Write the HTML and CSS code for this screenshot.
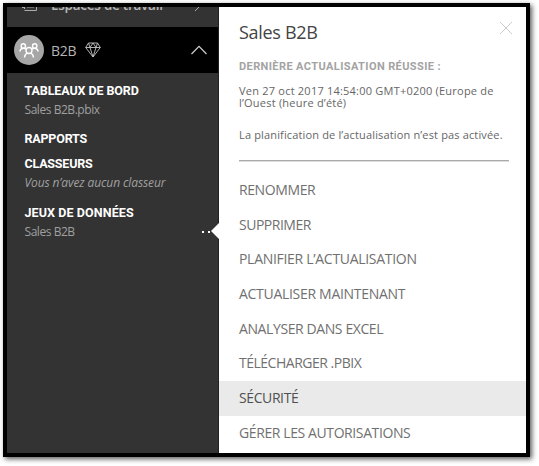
FILE: index.html
```html
<!DOCTYPE html>
<html lang="fr">
<head>
<meta charset="utf-8">
<title>Sales B2B</title>
<link rel="stylesheet" href="styles.css">
</head>
<body>
<div class="window">
  <nav class="sidebar">
    <div class="workspaces">
      <svg class="ws-icon" width="18" height="14" viewBox="0 0 18 14"><path d="M3.500 1v6M3.500 8.500h12V1M1 5.500h2.500M6 5h7" /></svg>
      <span class="ws-label">Espaces de travail</span>
      <svg class="ws-arrow" width="8" height="12" viewBox="0 0 8 12"><path d="M1 1l5 5-5 5"/></svg>
    </div>
    <div class="current">
      <svg class="avatar" width="30" height="30" viewBox="0 0 30 30">
        <circle cx="15" cy="15" r="15" fill="#a6a6a6"/>
        <g fill="none" stroke="#fff" stroke-width="1.4">
          <circle cx="9.300" cy="11" r="2.200"/><circle cx="20.700" cy="11" r="2.200"/><circle cx="15" cy="15.500" r="3"/>
          <path d="M6 16.500q0-3 3.300-3.300l3 1M24 16.500q0-3-3.300-3.300l-3 1M10.500 22.500q.3-3.500 3-4.300M19.500 22.500q-.3-3.500-3-4.300"/>
        </g>
      </svg>
      <span class="current-name">B2B</span>
      <svg class="diamond" width="16" height="16" viewBox="0 0 16 16"><path d="M3.500 1h9L15.300 5.500 8 15 .7 5.500zM.7 5.500h14.600M3.500 1l1.500 4.500L8 15l3-9.500L12.500 1M5 5.500L8 1l3 4.500"/></svg>
      <svg class="chevron" width="16" height="10" viewBox="0 0 16 10"><path d="M.5 9L8 1.300 15.500 9"/></svg>
    </div>
    <h2 class="w-tdb">TABLEAUX DE BORD</h2>
    <p class="w-pbix">Sales B2B.pbix</p>
    <h2 class="w-rap">RAPPORTS</h2>
    <h2 class="w-cla">CLASSEURS</h2>
    <p class="empty">Vous n’avez aucun classeur</p>
    <h2 class="w-jeux">JEUX DE DONNÉES</h2>
    <p class="dataset"><span>Sales B2B</span><span class="dots"><i></i><i></i></span></p>
  </nav>
  <main class="panel">
    <div class="pointer"></div>
    <header>
      <h1>Sales B2B</h1>
      <svg width="14" height="14" viewBox="0 0 14 14"><path d="M1 1l12 12M13 1L1 13"/></svg>
    </header>
    <h3>DERNIÈRE ACTUALISATION RÉUSSIE :</h3>
    <div class="info">Ven 27 oct 2017 14:54:00 GMT+0200 (Europe de<br>l’Ouest (heure d’été)</div>
    <div class="info schedule">La planification de l’actualisation n’est pas activée.</div>
    <div class="rule"></div>
    <ul>
      <li>RENOMMER</li>
      <li class="tight">SUPPRIMER</li>
      <li class="wide">PLANIFIER L’ACTUALISATION</li>
      <li class="wide">ACTUALISER MAINTENANT</li>
      <li>ANALYSER DANS EXCEL</li>
      <li class="tight">TÉLÉCHARGER .PBIX</li>
      <li class="selected">SÉCURITÉ</li>
      <li>GÉRER LES AUTORISATIONS</li>
    </ul>
  </main>
</div>
</body>
</html>
```
FILE: styles.css
```css
* { box-sizing: border-box; margin: 0; padding: 0; }
body { width: 539px; height: 466px; background: #fff; overflow: hidden; padding: 3px; font-family: "Open Sans", "Noto Sans", sans-serif; }
.window { width: 527px; height: 454px; border: 4px solid #000; display: flex; overflow: hidden; box-shadow: 2px 2px 5px rgba(0,0,0,.65); background: #fff; }
svg { fill: none; flex: none; }
.sidebar { width: 212px; background: #333; border-right: 1px solid #222; color: #a0a0a0; flex: none; }
.workspaces { height: 20px; display: flex; align-items: flex-start; overflow: hidden; padding-left: 14px; }
.ws-icon { stroke: #aaa; margin-top: -5px; }
.ws-label { font-size: 13.500px; line-height: 18px; margin: -11px 0 0 12px; color: #b8b8b8; width: 111px; white-space: nowrap; letter-spacing: -.25px; font-weight: 600; }
.ws-arrow { stroke: #aaa; margin: -7px 0 0 32px; }
.current { height: 46px; background: #000; display: flex; align-items: center; padding-left: 7px; }
.current-name { font-size: 14px; width: 34px; margin-left: 7px; color: #b5b5b5; letter-spacing: -.3px; }
.diamond { stroke: #c4c4c4; stroke-width: .9; }
.chevron { stroke: #d0d0d0; stroke-width: 1.2; margin-left: 90px; }
.sidebar h2 { font: 700 12.500px/16px Roboto, sans-serif; color: #fff; padding-left: 17.500px; white-space: nowrap; letter-spacing: -.1px; }
.sidebar p { font-size: 12px; line-height: 16px; padding-left: 17.500px; white-space: nowrap; }
.w-tdb { margin-top: 10px; }
.sidebar .w-pbix { margin-top: 3px; letter-spacing: -.45px; }
.w-rap { margin-top: 13px; }
.sidebar .w-rap, .sidebar .w-cla { letter-spacing: -.2px; }
.w-cla { margin-top: 9px; }
.sidebar .empty { margin-top: 3px; font-style: italic; letter-spacing: -.1px; }
.w-jeux { margin-top: 14px; }
.sidebar .w-jeux { letter-spacing: .1px; }
.sidebar .dataset { margin-top: 3px; display: flex; justify-content: space-between; align-items: center; padding-right: 8px; letter-spacing: -.45px; }
.dots { display: flex; gap: 4px; }
.dots i { width: 2px; height: 2px; background: #fff; }
.panel { width: 307px; position: relative; color: #666; }
.pointer { position: absolute; left: -8px; top: 216px; border: 8px solid transparent; border-right-color: #fff; border-left: 0; }
header { display: flex; justify-content: space-between; align-items: flex-start; padding: 14px 13px 0 20px; height: 49px; }
header svg { stroke: #ccc; }
h1 { font-size: 18px; font-weight: 400; line-height: 23px; color: #444; letter-spacing: -.3px; white-space: nowrap; }
h3 { font: 700 11px/16px Roboto, sans-serif; color: #a3a3a3; letter-spacing: .4px; padding: 3px 0 0 20px; white-space: nowrap; }
.info { font-size: 11px; line-height: 12px; padding-left: 20px; margin-top: 10px; white-space: nowrap; height: 24px; letter-spacing: .22px; }
.schedule { margin-top: 20px; height: 12px; letter-spacing: .15px; }
.rule { margin: 19px 17px 0 20px; height: 2px; border-top: 1px solid #aaa; background: #ddd; }
ul { list-style: none; margin-top: 11px; }
li { height: 34.700px; padding-left: 20px; font-size: 14px; line-height: 34.700px; letter-spacing: -.4px; color: #707070; white-space: nowrap; }
.wide { letter-spacing: -.3px; }
.tight { letter-spacing: -.49px; }
.selected { background: #eaeaea; color: #505050; }
```
